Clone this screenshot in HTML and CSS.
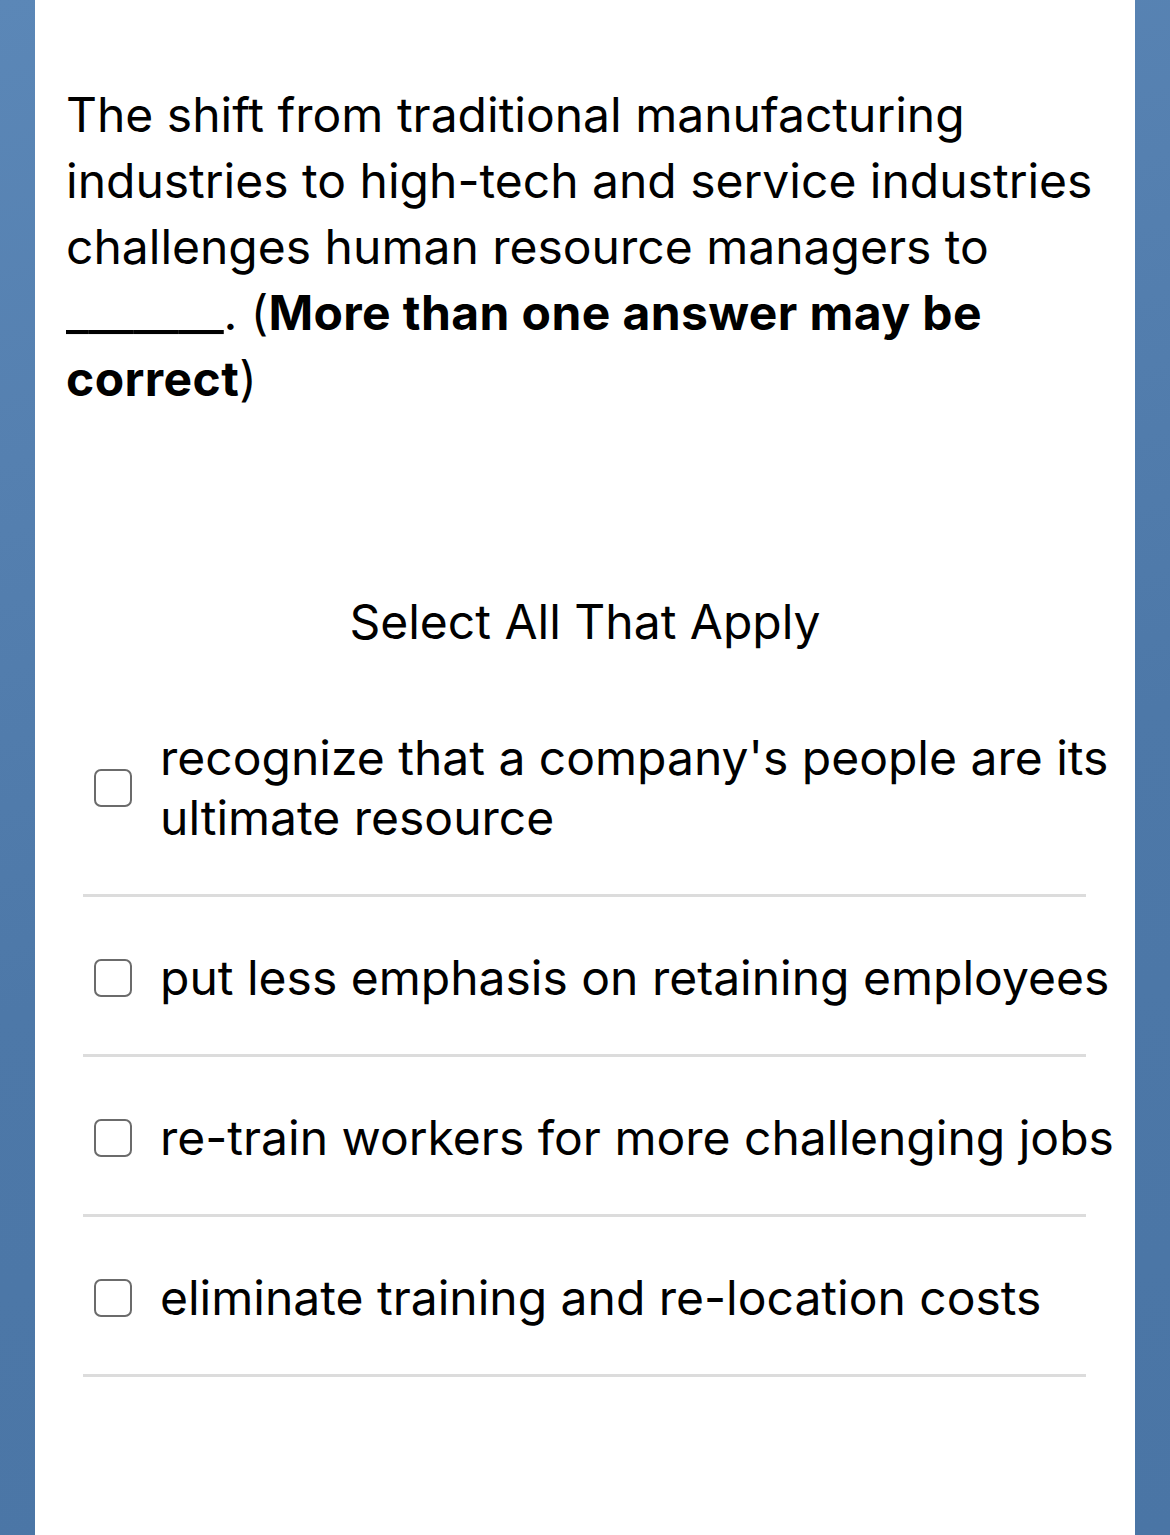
FILE: index.html
```html
<!DOCTYPE html>
<html lang="en">
<head>
<meta charset="utf-8">
<title>Question</title>
<link rel="stylesheet" href="styles.css">
</head>
<body>
<main class="card">
  <p class="question">The shift from traditional manufacturing industries to high-tech and service industries challenges human resource managers to <span class="blank">_______</span>. (<strong>More than one answer may be correct</strong>)</p>
  <h2 class="prompt">Select All That Apply</h2>
  <ul class="options">
    <li class="option"><label class="row"><span class="box"></span><span class="label">recognize that a company's people are its ultimate resource</span></label></li>
    <li class="option"><label class="row"><span class="box"></span><span class="label">put less emphasis on retaining employees</span></label></li>
    <li class="option"><label class="row"><span class="box"></span><span class="label">re-train workers for more challenging jobs</span></label></li>
    <li class="option"><label class="row"><span class="box"></span><span class="label">eliminate training and re-location costs</span></label></li>
  </ul>
</main>
</body>
</html>
```

FILE: styles.css
```css
html, body {
  margin: 0;
  padding: 0;
}
body {
  min-height: 1535px;
  background: linear-gradient(165deg, #5b87b7 0%, #5580b0 25%, #4d78a8 55%, #4a75a5 100%);
  font-family: Inter, "Noto Sans", sans-serif;
  color: #000;
}
.card {
  margin: 0 35px;
  min-height: 1535px;
  background: #fff;
  box-sizing: border-box;
  padding: 82px 31px 0 31px;
}
.question {
  margin: 0;
  font-size: 48px;
  line-height: 66px;
  font-weight: 400;
}
.question strong {
  font-weight: 700;
  letter-spacing: 0.4px;
}
.blank {
  font-size: 50px;
  line-height: 0;
  letter-spacing: -0.3px;
}
.prompt {
  margin: 180px 0 0 0;
  text-align: center;
  font-size: 48px;
  line-height: 60px;
  font-weight: 400;
}
.options {
  list-style: none;
  margin: 25px -21px 0 17px;
  padding: 0;
}
.option::after {
  content: "";
  display: block;
  height: 3px;
  background: #dcdcdc;
  margin-right: 39px;
}
.row {
  display: flex;
  align-items: center;
  gap: 28px;
  padding: 51px 0 46px 11px;
}
.box {
  flex: none;
  width: 34px;
  height: 34px;
  border: 2px solid #6b6b6b;
  border-radius: 7px;
}
.label {
  font-size: 48px;
  line-height: 60px;
}
```
